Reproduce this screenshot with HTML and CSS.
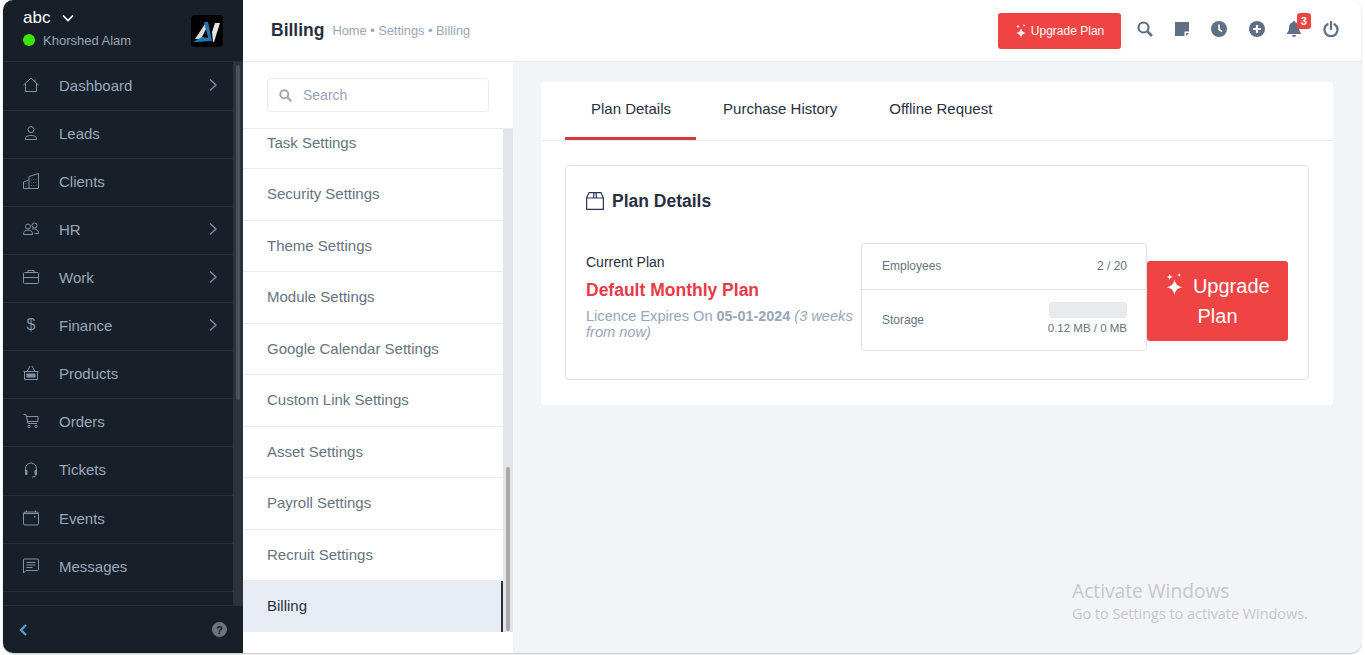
FILE: index.html
```html
<!DOCTYPE html>
<html lang="en">

<head>
    <meta charset="UTF-8">
    <meta name="viewport" content="width=device-width, initial-scale=1.0">
    <title>Billing</title>
    <link rel="stylesheet" href="styles.css">
</head>

<body>
    <div class="app">

        <!-- Left menu -->
        <aside class="sidebar">
            <div class="side-head">
                <div class="company">
                    <div class="company-name">abc
                        <svg class="caret" width="12" height="12" viewBox="0 0 12 12"><path d="M1 3.5l5 5 5-5" fill="none" stroke="#fff" stroke-width="1.6"/></svg>
                    </div>
                    <div class="user-name"><span class="dot"></span>Khorshed Alam</div>
                </div>
                <div class="logo">
                    <svg width="32" height="32" viewBox="0 0 32 32">
                        <polygon points="4,24 14,9 15,14 10,24" fill="#d9d9d9"/>
                        <polygon points="13,7 17,7 21,26 18,26" fill="#1f78b4"/>
                        <polygon points="2,27 11,22 19,23 18,26 7,27" fill="#1f78b4"/>
                        <polygon points="21,17 24,8 29,8 23,27 22,27" fill="#e4e4e4"/>
                    </svg>
                </div>
            </div>

            <div class="side-body">
                <nav class="menu">
                    <a class="menu-item">
                        <svg class="menu-icon" viewBox="0 0 16 16"><path d="M.5 8L8 1l7.5 7M2.5 6.500V14.500h11V6.500M12 2.500v2"/></svg>
                        <span>Dashboard</span>
                        <svg class="arrow" viewBox="0 0 10 14"><path d="M2 1.5L8 7l-6 5.5"/></svg>
                    </a>
                    <a class="menu-item">
                        <svg class="menu-icon" viewBox="0 0 16 16"><circle cx="8" cy="4.500" r="3"/><path d="M2.5 14.5v-1c0-1.800 2-3 5.500-3s5.500 1.200 5.500 3v1z"/></svg>
                        <span>Leads</span>
                    </a>
                    <a class="menu-item">
                        <svg class="menu-icon" viewBox="0 0 16 16"><path d="M.5 15.5V9L6 7V3.500L15.500 .5v15zM6 7v8.500M3 10.500v.5M3 13v.5M8.500 6v.5M10.500 6v.5M12.800 6v.5M8.500 9v.5M10.500 9v.5M12.800 9v.5M8.500 12v.5M10.500 12v.5M12.800 12v.5"/></svg>
                        <span>Clients</span>
                    </a>
                    <a class="menu-item">
                        <svg class="menu-icon" viewBox="0 0 16 16"><circle cx="5" cy="5.500" r="2.500"/><circle cx="11.500" cy="4.500" r="2.500"/><path d="M.5 13.500c0-3 1.500-4.500 4.500-4.500s4.500 1.500 4.500 4.500zM9 8c4-.5 6.500 1 6.500 4.500h-4"/></svg>
                        <span>HR</span>
                        <svg class="arrow" viewBox="0 0 10 14"><path d="M2 1.5L8 7l-6 5.5"/></svg>
                    </a>
                    <a class="menu-item">
                        <svg class="menu-icon" viewBox="0 0 16 16"><rect x=".5" y="3.500" width="15" height="11" rx="1"/><path d="M5 3.500V1.500h6v2M.5 8.500h15"/></svg>
                        <span>Work</span>
                        <svg class="arrow" viewBox="0 0 10 14"><path d="M2 1.5L8 7l-6 5.5"/></svg>
                    </a>
                    <a class="menu-item">
                        <span class="menu-icon dollar">$</span>
                        <span>Finance</span>
                        <svg class="arrow" viewBox="0 0 10 14"><path d="M2 1.5L8 7l-6 5.5"/></svg>
                    </a>
                    <a class="menu-item">
                        <svg class="menu-icon" viewBox="0 0 16 16"><path d="M.5 6.500h15M1.500 6.500v8h13v-8M4 6.500l3-5.500M12 6.500L9 1"/><rect class="icon-fill" x="3.500" y="8.500" width="9" height="4"/></svg>
                        <span>Products</span>
                    </a>
                    <a class="menu-item">
                        <svg class="menu-icon" viewBox="0 0 16 16"><path d="M.5 1.500h2.500l2 9h9M3.500 3.500h11.500v5H4.500"/><circle cx="6" cy="13.500" r="1.200"/><circle cx="13" cy="13.500" r="1.200"/></svg>
                        <span>Orders</span>
                    </a>
                    <a class="menu-item tall">
                        <svg class="menu-icon" viewBox="0 0 16 16"><path d="M2.500 9V6.500a5.500 5.500 0 0 1 11 0V9M13 12.500c0 2-1 2.500-4 2.500"/><rect class="icon-fill" x="2" y="8" width="2.500" height="5" rx="1"/><rect class="icon-fill" x="11.500" y="8" width="2.500" height="5" rx="1"/></svg>
                        <span>Tickets</span>
                    </a>
                    <a class="menu-item">
                        <svg class="menu-icon" viewBox="0 0 16 16"><rect x=".5" y="2" width="15" height="13" rx="1.500"/><path d="M3.500 .5V2M12.500 .5V2M.5 3.500h15"/><rect class="icon-fill" x="11" y="6" width="1.500" height="1.500"/></svg>
                        <span>Events</span>
                    </a>
                    <a class="menu-item">
                        <svg class="menu-icon" viewBox="0 0 16 16"><path d="M.5 15V2a1 1 0 0 1 1-1h13a1 1 0 0 1 1 1v9.500a1 1 0 0 1-1 1H3zM3.500 4.500h9M3.500 7h9M3.500 9.500h6"/></svg>
                        <span>Messages</span>
                    </a>
                    <a class="menu-item"></a>
                </nav>
                <div class="side-scroll"><div class="side-thumb"></div></div>
            </div>

            <div class="side-foot">
                <svg class="collapse" width="10" height="14" viewBox="0 0 10 14"><path d="M8 2L3 7l5 5" fill="none" stroke="#5b9bd5" stroke-width="2.4"/></svg>
                <svg width="15" height="15" viewBox="0 0 16 16"><circle cx="8" cy="8" r="8" fill="#6c7480"/><text x="8" y="12.5" text-anchor="middle" class="help-mark">?</text></svg>
            </div>
        </aside>

        <div class="main">

            <!-- Top bar -->
            <header class="topbar">
                <div class="page-title">
                    <h1>Billing</h1>
                    <span class="crumbs">Home • Settings • Billing</span>
                </div>
                <div class="top-actions">
                    <button type="button" class="btn-upgrade">
                        <svg width="12" height="14" viewBox="0 0 24 28"><path class="spark" d="M12 8c1 6 4 9 10 10-6 1-9 4-10 10-1-6-4-9-10-10 6-1 9-4 10-10zM6 1c.4 2.500 1.500 3.600 4 4-2.500.4-3.600 1.500-4 4-.4-2.500-1.500-3.600-4-4 2.500-.4 3.600-1.500 4-4zM18 0c.3 1.600 1 2.300 2.500 2.500C19 2.800 18.300 3.500 18 5c-.3-1.500-1-2.200-2.500-2.500C17 2.300 17.700 1.600 18 0z"/></svg>
                        Upgrade Plan
                    </button>
                    <div class="top-icons">
                        <svg class="top-icon" viewBox="0 0 16 16"><circle cx="6.500" cy="6.500" r="5" fill="none" stroke="#5f6f85" stroke-width="2.2"/><path d="M10.500 10.500l4.500 4.500" stroke="#5f6f85" stroke-width="2.6" fill="none"/></svg>
                        <svg class="top-icon" viewBox="0 0 16 16"><path d="M1 1h14v9.500h-4.500V15H1z" fill="#5f6f85"/><path d="M12 12h3l-3 3z" fill="#5f6f85"/></svg>
                        <svg class="top-icon" viewBox="0 0 16 16"><circle cx="8" cy="8" r="8" fill="#5f6f85"/><path d="M8 3.500V8.500l3 2" stroke="#fff" stroke-width="1.6" fill="none"/></svg>
                        <svg class="top-icon" viewBox="0 0 16 16"><circle cx="8" cy="8" r="8" fill="#5f6f85"/><path d="M8 4v8M4 8h8" stroke="#fff" stroke-width="2.2"/></svg>
                        <div class="bell">
                            <svg class="top-icon" viewBox="0 0 16 16"><path d="M8 0c.7 0 1.200.5 1.200 1.200C11.800 1.800 13 4 13 6.500c0 3 1 4.500 2 5.500v1H1v-1c1-1 2-2.500 2-5.500 0-2.500 1.200-4.700 3.800-5.300C6.800.5 7.300 0 8 0zM6 14h4a2 2 0 0 1-4 0z" fill="#5f6f85"/></svg>
                            <span class="badge">3</span>
                        </div>
                        <svg class="top-icon" viewBox="0 0 16 16"><path d="M4.500 3.200a6.500 6.500 0 1 0 7 0M8 1v7" fill="none" stroke="#5f6f85" stroke-width="2.2" stroke-linecap="round"/></svg>
                    </div>
                </div>
            </header>

            <div class="page">

                <!-- Settings list -->
                <div class="settings">
                    <div class="search-wrap">
                        <div class="search-box">
                            <svg width="13" height="13" viewBox="0 0 16 16"><circle cx="6.500" cy="6.500" r="5" fill="none" stroke="#9ca8b9" stroke-width="2.4"/><path d="M10.500 10.500l4.500 4.500" stroke="#9ca8b9" stroke-width="2.8"/></svg>
                            <span>Search</span>
                        </div>
                    </div>
                    <div class="settings-scroll">
                        <ul class="settings-list">
                            <li>Task Settings</li>
                            <li>Security Settings</li>
                            <li>Theme Settings</li>
                            <li>Module Settings</li>
                            <li>Google Calendar Settings</li>
                            <li>Custom Link Settings</li>
                            <li>Asset Settings</li>
                            <li>Payroll Settings</li>
                            <li>Recruit Settings</li>
                            <li class="active">Billing</li>
                        </ul>
                        <div class="list-scroll"><div class="list-thumb"></div></div>
                    </div>
                </div>

                <!-- Content -->
                <div class="content">
                    <div class="card">
                        <div class="tabs">
                            <a class="tab active">Plan Details</a>
                            <a class="tab">Purchase History</a>
                            <a class="tab">Offline Request</a>
                        </div>
                        <div class="card-body">
                            <div class="plan-box">
                                <h2 class="plan-title">
                                    <svg width="18" height="18" viewBox="0 0 18 18"><path d="M.6 6L3 .6h12L17.4 6M.6 6h16.800v11.400H.6zM7.500 6L8 .6M10.500 6L10 .6" fill="none" stroke="#2b3555" stroke-width="1.2"/></svg>
                                    Plan Details
                                </h2>
                                <div class="plan-row">
                                    <div class="plan-info">
                                        <div class="plan-label">Current Plan</div>
                                        <div class="plan-name">Default Monthly Plan</div>
                                        <div class="plan-expiry">Licence Expires On <b>05-01-2024</b> <i>(3 weeks from now)</i></div>
                                    </div>
                                    <div class="usage">
                                        <div class="usage-row first">
                                            <span>Employees</span>
                                            <span>2 / 20</span>
                                        </div>
                                        <div class="usage-row storage">
                                            <span>Storage</span>
                                            <div class="storage-val">
                                                <div class="storage-bar"></div>
                                                <span>0.12 MB / 0 MB</span>
                                            </div>
                                        </div>
                                    </div>
                                    <button type="button" class="btn-big">
                                        <svg width="19" height="22" viewBox="0 0 24 28"><path class="spark" d="M12 8c1 6 4 9 10 10-6 1-9 4-10 10-1-6-4-9-10-10 6-1 9-4 10-10zM6 1c.4 2.500 1.500 3.600 4 4-2.500.4-3.600 1.500-4 4-.4-2.500-1.500-3.600-4-4 2.500-.4 3.600-1.500 4-4zM18 0c.3 1.600 1 2.300 2.500 2.500C19 2.800 18.300 3.500 18 5c-.3-1.500-1-2.200-2.500-2.500C17 2.300 17.700 1.600 18 0z"/></svg>
                                        Upgrade Plan
                                    </button>
                                </div>
                            </div>
                        </div>
                    </div>
                    <div class="watermark">
                        <div class="wm-big">Activate Windows</div>
                        <div class="wm-small">Go to Settings to activate Windows.</div>
                    </div>
                </div>

            </div>
        </div>
    </div>
</body>

</html>
```

FILE: styles.css
```css
* {
    box-sizing: border-box;
}

html, body {
    height: 100%;
}

body {
    margin: 0;
    padding: 0 4px 0 3px;
    background: #fff;
    font-family: "Liberation Sans", Arial, sans-serif;
    overflow: hidden;
}

.app {
    display: flex;
    height: 653px;
    border-radius: 10px;
    overflow: hidden;
    background: #f2f4f8;
    box-shadow: 0 1px 2px rgba(0, 0, 0, .25);
}

/* sidebar */
.sidebar {
    width: 240px;
    flex-shrink: 0;
    display: flex;
    flex-direction: column;
    background: #171f29;
}

.side-head {
    height: 62px;
    padding: 0 20px;
    display: flex;
    align-items: center;
    justify-content: space-between;
    border-bottom: 1px solid #262e39;
    flex-shrink: 0;
}

.company {
    margin-bottom: 2px;
}

.company-name {
    color: #fff;
    font-size: 17px;
    line-height: 18px;
    display: flex;
    align-items: center;
    gap: 12px;
    margin-bottom: 5px;
}

.user-name {
    display: flex;
    align-items: center;
    gap: 8px;
    color: #99a5b5;
    font-size: 13px;
    line-height: 18px;
}

.dot {
    width: 12px;
    height: 12px;
    margin-bottom: 3px;
    border-radius: 50%;
    background: #39e600;
}

.logo {
    width: 32px;
    height: 32px;
    background: #000;
    border-radius: 4px;
}

.logo svg {
    display: block;
}

.side-body {
    flex: 1;
    min-height: 0;
    display: flex;
    overflow: hidden;
}

.menu {
    flex: 1;
    overflow: hidden;
    padding-top: 1px;
}

.menu-item {
    height: 48px;
    padding: 0 15px 3px 20px;
    display: flex;
    align-items: center;
    border-bottom: 1px solid #262e39;
    color: #99a8ba;
    font-size: 15px;
}

.menu-item.tall {
    height: 49px;
}

.menu-item span:not(.menu-icon) {
    flex: 1;
}

.menu-icon {
    width: 16px;
    height: 16px;
    margin-right: 20px;
    flex-shrink: 0;
    fill: none;
    stroke: #8492a6;
    stroke-width: 1;
}

.icon-fill {
    fill: #8492a6;
    stroke: none;
}

.dollar {
    color: #8492a6;
    font-size: 16px;
    line-height: 16px;
    text-align: center;
}

.arrow {
    width: 10px;
    height: 14px;
    fill: none;
    stroke: #8492a6;
    stroke-width: 1.3;
}

.side-scroll {
    width: 10px;
    background: #2a323c;
    padding-top: 3px;
}

.side-thumb {
    width: 4px;
    height: 335px;
    margin-left: 3px;
    border-radius: 2px;
    background: #4a5058;
}

.side-foot {
    height: 48px;
    flex-shrink: 0;
    padding: 0 16px 0 15px;
    display: flex;
    align-items: center;
    justify-content: space-between;
    border-top: 1px solid #262e39;
}

.help-mark {
    font-family: "Liberation Sans", Arial, sans-serif;
    font-size: 12px;
    font-weight: bold;
    fill: #171f29;
}

/* top bar */
.main {
    flex: 1;
    min-width: 0;
    display: flex;
    flex-direction: column;
}

.topbar {
    height: 62px;
    flex-shrink: 0;
    padding: 0 22px 0 28px;
    display: flex;
    align-items: center;
    justify-content: space-between;
    background: #fff;
    border-bottom: 1px solid #e8ebf0;
}

.page-title {
    display: flex;
    align-items: baseline;
    gap: 8px;
    margin-bottom: 1px;
}

.page-title h1 {
    margin: 0;
    font-size: 17.5px;
    font-weight: bold;
    color: #28303f;
}

.crumbs {
    position: relative;
    top: -1px;
    font-size: 12.8px;
    color: #99a5b8;
}

.top-actions {
    display: flex;
    align-items: center;
    gap: 16px;
}

.btn-upgrade {
    height: 36px;
    width: 123px;
    border: 0;
    border-radius: 3px;
    background: #ef4444;
    color: #fff;
    font-family: inherit;
    font-size: 12px;
    display: flex;
    align-items: center;
    justify-content: center;
    gap: 4px;
}

.spark {
    fill: #fff;
}

.top-icons {
    display: flex;
    align-items: center;
    gap: 21.2px;
    margin-bottom: 3px;
}

.top-icon {
    width: 16px;
    height: 16px;
    display: block;
}

.bell {
    position: relative;
}

.badge {
    position: absolute;
    top: -8px;
    right: -9px;
    width: 14px;
    height: 16px;
    border-radius: 3px;
    background: #ef4444;
    color: #fff;
    font-size: 11px;
    font-weight: bold;
    line-height: 16px;
    text-align: center;
}

/* settings list */
.page {
    flex: 1;
    display: flex;
    min-height: 0;
}

.settings {
    width: 270px;
    flex-shrink: 0;
    background: #fff;
    display: flex;
    flex-direction: column;
    padding-bottom: 21px;
}

.search-wrap {
    height: 67px;
    padding: 16px 24px 0 24px;
    border-bottom: 1px solid #e8ebf0;
    flex-shrink: 0;
}

.search-box {
    height: 34px;
    border: 1px solid #e8ebf0;
    border-radius: 4px;
    padding: 0 11px;
    display: flex;
    align-items: center;
    gap: 11px;
    color: #99a5b8;
    font-size: 14px;
}

.settings-scroll {
    flex: 1;
    display: flex;
    min-height: 0;
    overflow: hidden;
}

.settings-list {
    flex: 1;
    list-style: none;
    margin: -11.5px 0 0;
    padding: 0;
}

.settings-list li {
    height: 51.5px;
    padding: 0 0 1px 24px;
    display: flex;
    align-items: center;
    border-bottom: 1px solid #e8ebf0;
    color: #667382;
    font-size: 15px;
}

.settings-list li.active {
    height: 52px;
    padding-bottom: 3px;
    background: #e8edf5;
    color: #28303f;
    border-bottom: 0;
    border-right: 2px solid #28303f;
}

.list-scroll {
    width: 10px;
    background: #e2e6ea;
    padding: 338px 0 0 3px;
}

.list-thumb {
    width: 4px;
    height: 164px;
    border-radius: 2px;
    background: #aba8a8;
}

/* content */
.content {
    flex: 1;
    min-width: 0;
    position: relative;
    padding: 20px 28px 0 28px;
}

.card {
    background: #fff;
    border-radius: 4px;
    height: 323px;
}

.tabs {
    height: 59px;
    padding: 0 24px;
    display: flex;
    border-bottom: 1px solid #e8ebf0;
}

.tab {
    padding: 0 26px;
    height: 58px;
    line-height: 54px;
    color: #28303f;
    font-size: 15px;
}

.tab.active {
    padding-right: 25px;
    margin-right: 1px;
    border-bottom: 3px solid #d9383a;
}

.card-body {
    padding: 24px;
}

.plan-box {
    height: 215px;
    border: 1px solid #dfe1e5;
    border-radius: 4px;
    padding: 0 20px;
}

.plan-title {
    margin: 0;
    padding-top: 24px;
    display: flex;
    align-items: center;
    gap: 8px;
    font-size: 17.5px;
    font-weight: bold;
    line-height: 22px;
    color: #28303f;
}

.plan-row {
    display: flex;
    align-items: flex-start;
    margin-top: 31px;
}

.plan-info {
    width: 275px;
    flex-shrink: 0;
    padding: 10px 4px 0 0;
}

.plan-label {
    font-size: 14px;
    line-height: 18px;
    color: #28303f;
}

.plan-name {
    margin-top: 8px;
    font-size: 17.5px;
    font-weight: bold;
    line-height: 22px;
    color: #e93a46;
}

.plan-expiry {
    margin-top: 7px;
    font-size: 14.6px;
    line-height: 16px;
    color: #99a5b8;
}

.plan-expiry b {
    font-size: 14.4px;
}

.usage {
    width: 286px;
    height: 108px;
    flex-shrink: 0;
    border: 1px solid #dfe1e5;
    border-radius: 4px;
    font-size: 12px;
    color: #667382;
}

.usage-row {
    height: 46px;
    padding: 0 19px 0 20px;
    display: flex;
    align-items: center;
    justify-content: space-between;
    border-bottom: 1px solid #dfe1e5;
}

.usage-row.first {
    padding-bottom: 2px;
}

.usage-row.storage {
    height: 60px;
    border-bottom: 0;
}

.storage-val {
    margin-bottom: 3px;
    text-align: right;
    font-size: 11.5px;
    line-height: 13px;
}

.storage-bar {
    width: 78px;
    height: 16px;
    border-radius: 3px;
    background: #e8ebee;
    margin: 0 0 4px auto;
}

.btn-big {
    width: 141px;
    height: 80px;
    flex-shrink: 0;
    margin-top: 18px;
    border: 0;
    border-radius: 3px;
    background: #ef4444;
    color: #fff;
    font-family: inherit;
    font-size: 20px;
    line-height: 30px;
    padding: 0 12px;
}

.btn-big svg {
    vertical-align: -2px;
    margin-right: 3px;
}

/* windows watermark */
.watermark {
    position: absolute;
    left: 559px;
    top: 516px;
    color: #c6c8cb;
    font-family: "Open Sans", sans-serif;
}

.wm-big {
    font-size: 19.2px;
    line-height: 26px;
}

.wm-small {
    font-size: 14.4px;
    line-height: 19px;
}
```
